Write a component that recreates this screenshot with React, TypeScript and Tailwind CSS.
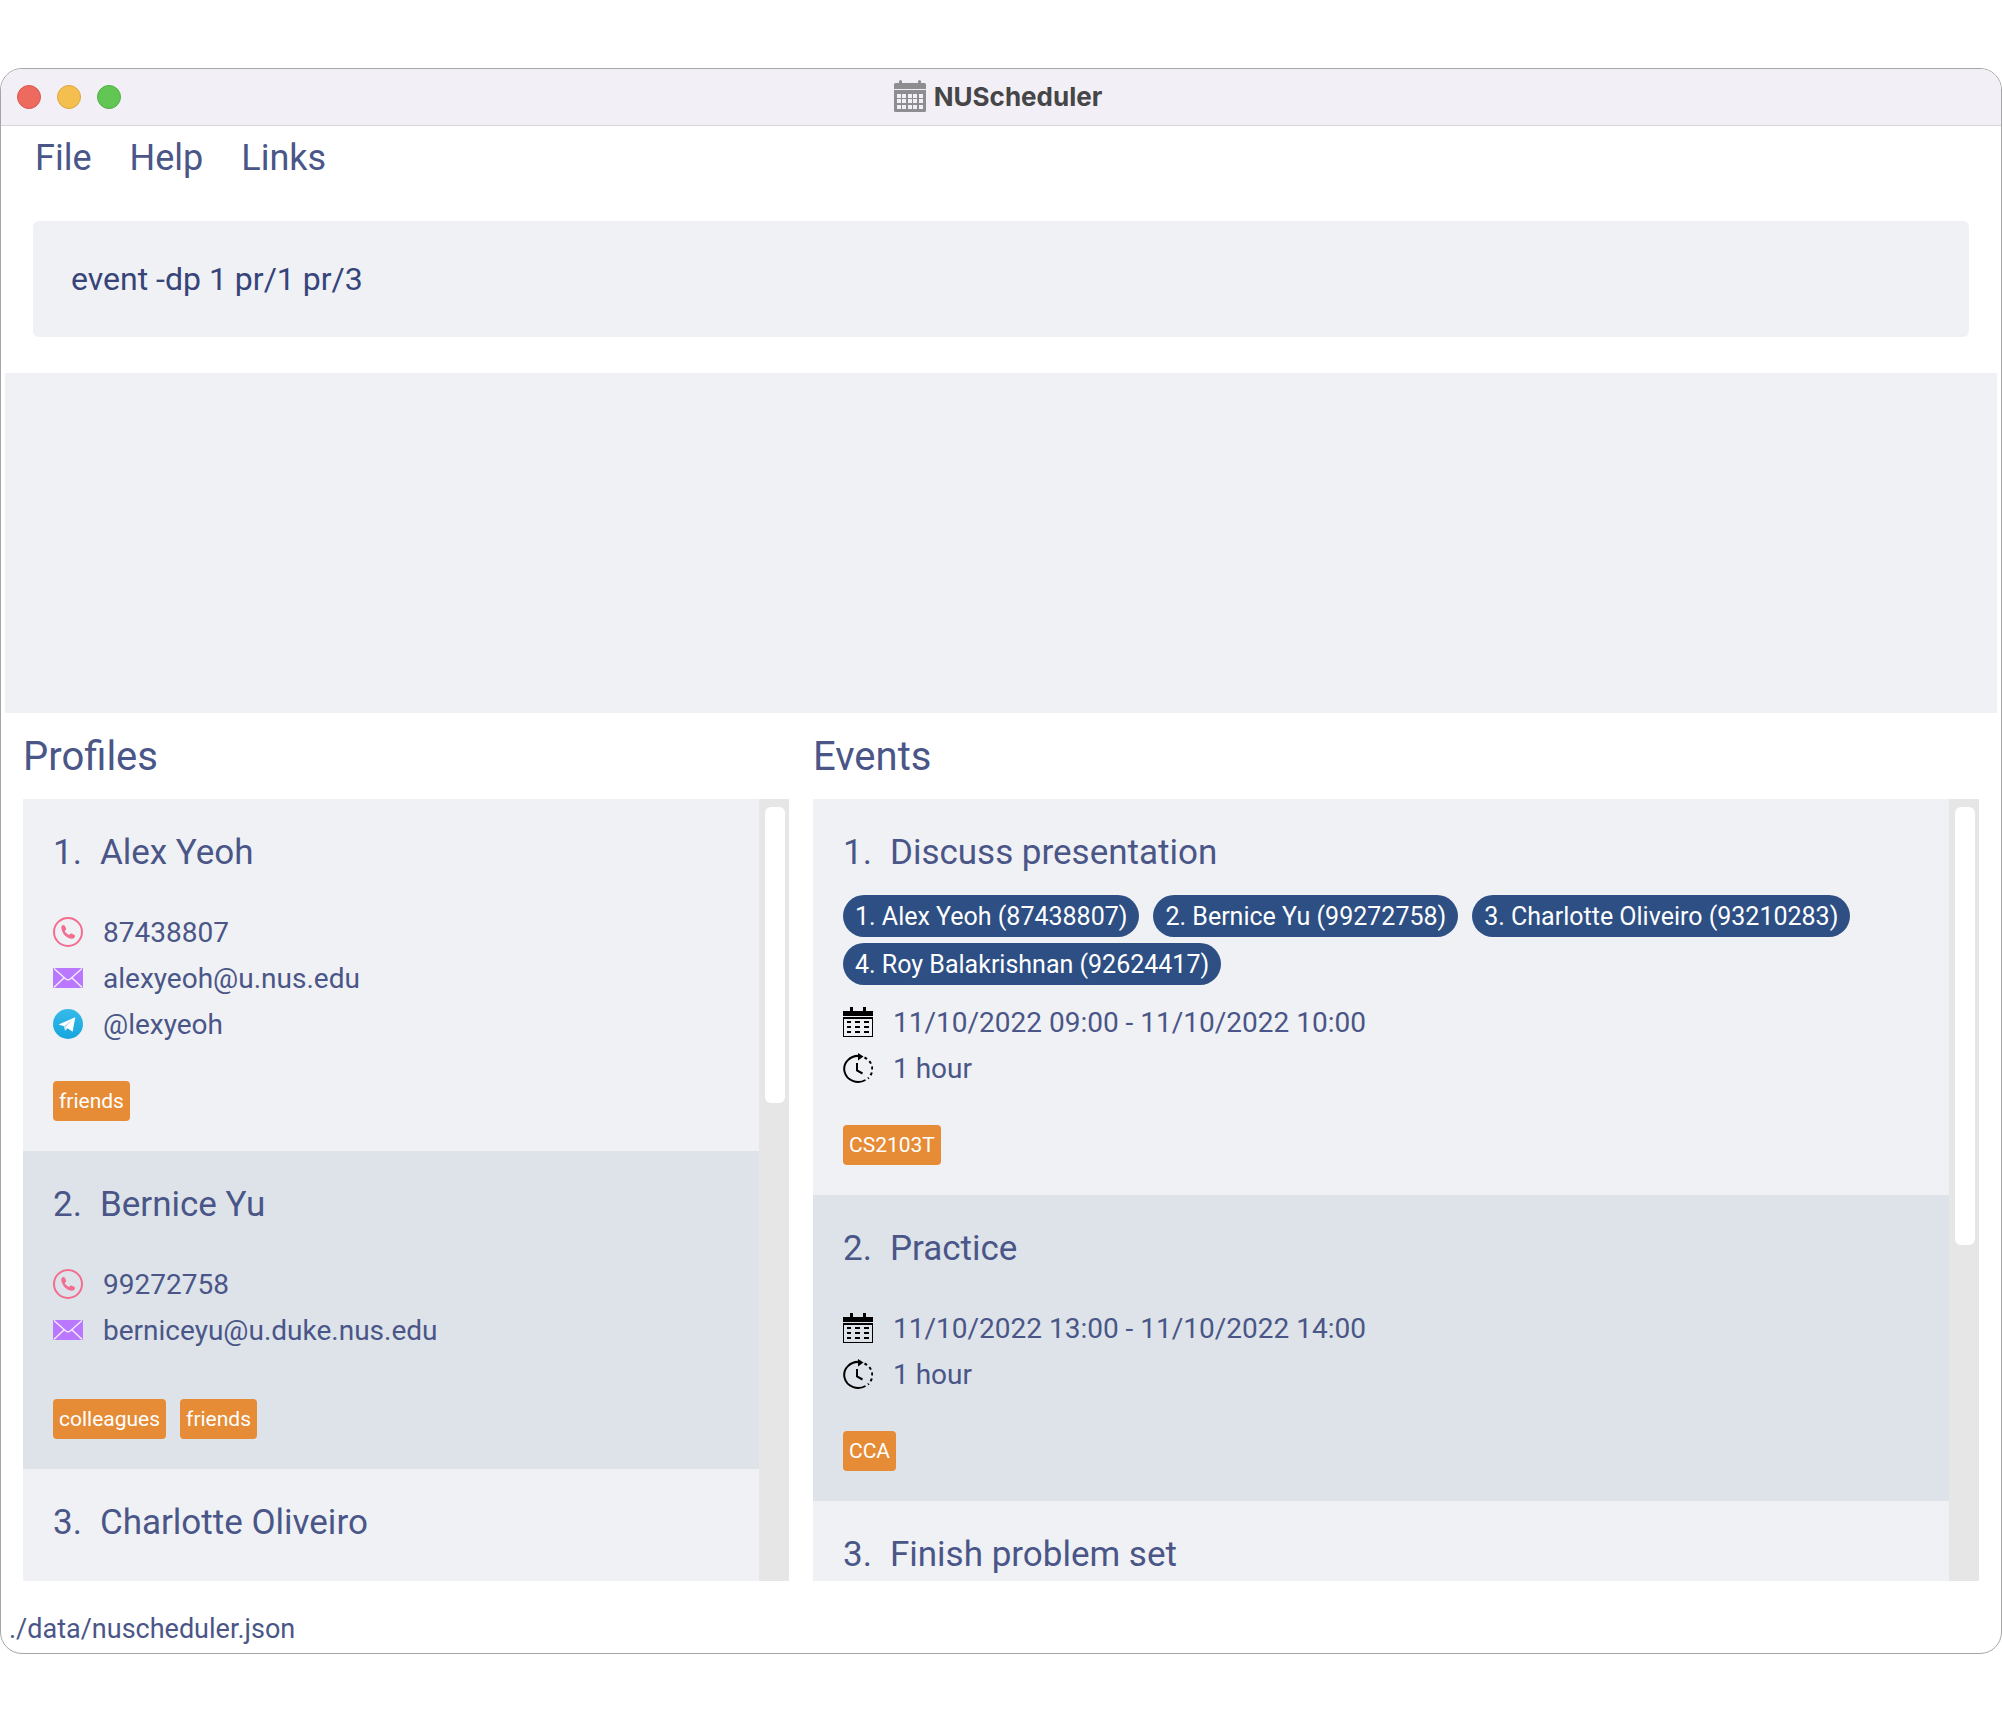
import type { ReactNode } from "react";

type Profile = {
  name: string;
  phone?: string;
  email?: string;
  telegram?: string;
  tags: string[];
};

type ScheduledEvent = {
  title: string;
  attendees: string[];
  period?: string;
  duration?: string;
  tags: string[];
};

const profiles: Profile[] = [
  {
    name: "Alex Yeoh",
    phone: "87438807",
    email: "alexyeoh@u.nus.edu",
    telegram: "@lexyeoh",
    tags: ["friends"],
  },
  {
    name: "Bernice Yu",
    phone: "99272758",
    email: "berniceyu@u.duke.nus.edu",
    tags: ["colleagues", "friends"],
  },
  { name: "Charlotte Oliveiro", tags: [] },
];

const events: ScheduledEvent[] = [
  {
    title: "Discuss presentation",
    attendees: [
      "1. Alex Yeoh (87438807)",
      "2. Bernice Yu (99272758)",
      "3. Charlotte Oliveiro (93210283)",
      "4. Roy Balakrishnan (92624417)",
    ],
    period: "11/10/2022 09:00 - 11/10/2022 10:00",
    duration: "1 hour",
    tags: ["CS2103T"],
  },
  {
    title: "Practice",
    attendees: [],
    period: "11/10/2022 13:00 - 11/10/2022 14:00",
    duration: "1 hour",
    tags: ["CCA"],
  },
  { title: "Finish problem set", attendees: [], tags: [] },
];

function AppIcon() {
  return (
    <svg viewBox="0 0 32 32" className="size-8" aria-hidden="true">
      <path fill="#8e8e90" d="M5 3V1.500a1.500 1.500 0 0 1 3 0V3h16V1.500a1.500 1.500 0 0 1 3 0V3h3.500A1.500 1.500 0 0 1 32 4.500V9H0V4.500A1.500 1.500 0 0 1 1.500 3z" />
      <path fill="#8e8e90" d="M0 10h32v20.500a1.500 1.500 0 0 1-1.500 1.500h-29A1.500 1.500 0 0 1 0 30.500z" />
      {[14, 19, 25].map((y) =>
        [3, 8, 14, 19, 25].map((x) => (
          <rect key={`${x}-${y}`} x={x} y={y} width="4" height="4" fill="#f2f0f6" />
        )),
      )}
    </svg>
  );
}

function PhoneIcon() {
  return (
    <svg viewBox="0 0 30 30" className="size-[30px]" aria-hidden="true">
      <circle cx="15" cy="15" r="14" fill="none" stroke="#f26d8f" strokeWidth="2" />
      <path
        fill="#f26d8f"
        d="M8.300 10.500c0-1.400 1-2.400 2.200-2.500.7 0 1.100.4 1.500 1.200l1 2.100c.3.700.1 1.300-.4 1.800l-.9.900c.8 1.700 2.500 3.200 4.400 4l1-1c.5-.5 1.100-.6 1.700-.3l2.300 1.100c.8.400 1 .9.900 1.500-.2 1.500-1.400 2.500-3 2.500-5.400-.3-10.500-5.700-10.700-11.300z"
      />
    </svg>
  );
}

function MailIcon() {
  return (
    <svg viewBox="0 0 30 30" className="size-[30px]" aria-hidden="true">
      <rect y="5" width="30" height="20" fill="#b978ff" />
      <path
        fill="none"
        stroke="#f4effb"
        strokeWidth="1.400"
        d="M1 5.500l11.500 10.200a3.700 3.700 0 0 0 5 0L29 5.500M0.800 24.500l10.400-9.800M29.200 24.500l-10.400-9.800"
      />
    </svg>
  );
}

function TelegramIcon() {
  return (
    <svg viewBox="0 0 30 30" className="size-[30px]" aria-hidden="true">
      <defs>
        <linearGradient id="telegram-sky" x1="0" y1="0" x2="0" y2="1">
          <stop offset="0" stopColor="#37bbe8" />
          <stop offset="1" stopColor="#15a5de" />
        </linearGradient>
      </defs>
      <circle cx="15" cy="15" r="15" fill="url(#telegram-sky)" />
      <path fill="#fff" d="M5.500 15.500L22.300 8.200 19.600 22.700 14.600 19.300 12.200 21.500 11 17.200z" />
      <path fill="#c3dcf0" d="M11 17.200L20 10.300 13 18 12.200 22z" />
    </svg>
  );
}

function CalendarIcon() {
  return (
    <svg viewBox="0 0 30 30" className="size-[30px]" shapeRendering="crispEdges" aria-hidden="true">
      <path d="M7 0h3v4h10V0h3v4h7v5H0V4h7z" />
      <path fillRule="evenodd" d="M0 10h30v20H0zM1 12v17h28V12z" />
      {[14, 19, 24].map((y) => (
        <path key={y} d={`M4 ${y}h4v2h-4zM12 ${y}h5v2h-5zM21 ${y}h5v2h-5z`} />
      ))}
    </svg>
  );
}

function ClockIcon() {
  return (
    <svg viewBox="0 0 30 30" className="size-[30px]" fill="none" stroke="#000" strokeWidth="2" aria-hidden="true">
      <path d="M17 3A14 13 0 1 0 22.500 27" />
      <path strokeDasharray="3 3" d="M21.500 4.500A14 13 0 0 1 25 25.500" />
      <path fill="#000" stroke="none" d="M15 0l5.500 3.500-5.500 4z" />
      <path d="M14 10v7.500l5.500 3" />
    </svg>
  );
}

function DetailRow({ icon, children }: { icon: ReactNode; children: ReactNode }) {
  return (
    <div className="flex h-[46px] items-center gap-5 text-[28px]">
      {icon}
      <span className="pt-0.5">{children}</span>
    </div>
  );
}

function Tags({ labels }: { labels: string[] }) {
  return (
    <ul className="mt-[34px] flex flex-wrap gap-[14px]">
      {labels.map((label) => (
        <li key={label} className="flex h-10 items-center rounded-[4px] bg-[#e68b36] px-1.5 pt-0.5 text-[21px] text-white">
          {label}
        </li>
      ))}
    </ul>
  );
}

function Card({ index, title, children }: { index: number; title: string; children?: ReactNode }) {
  return (
    <li className="shrink-0 p-[30px] last:grow odd:bg-[#f0f1f5] even:bg-[#dee3ea]">
      <h3 className="flex h-[46px] items-center gap-[18px] pt-0.5 text-[35px]">
        <span>{index}.</span>
        <span>{title}</span>
      </h3>
      {children}
    </li>
  );
}

function Panel({ heading, thumb, children }: { heading: string; thumb: string; children: ReactNode }) {
  return (
    <section className="flex min-h-0 min-w-0 flex-col">
      <h2 className="flex h-[86px] shrink-0 items-center pt-0.5 text-[40px]">{heading}</h2>
      <div className="flex min-h-0 flex-1">
        <ul className="flex min-w-0 flex-1 flex-col overflow-hidden">{children}</ul>
        <div className="w-[30px] shrink-0 bg-[#e6e6e6] py-2 pr-1 pl-1.5">
          <div className={`rounded-md bg-white ${thumb}`} />
        </div>
      </div>
    </section>
  );
}

export default function App() {
  return (
    <div className="h-screen bg-white py-[68px] font-['Roboto',sans-serif] text-[#4a5687]">
      <main className="flex h-full flex-col overflow-hidden rounded-[22px] border border-[#a6a6a8] bg-white">
        <header className="grid h-[57px] shrink-0 grid-cols-[1fr_auto_1fr] items-center border-b border-[#d6d5d8] bg-[#f2f0f6] px-4">
          <div className="flex gap-4">
            <button aria-label="Close" className="size-6 rounded-full border border-[#d9574c] bg-[#ed6a5f]" />
            <button aria-label="Minimize" className="size-6 rounded-full border border-[#dba63c] bg-[#f5bf4f]" />
            <button aria-label="Zoom" className="size-6 rounded-full border border-[#4fae42] bg-[#62c655]" />
          </div>
          <h1 className="flex items-center gap-2 pr-1.5 pb-0.5 font-['Inter',sans-serif] text-[26px] font-bold text-[#464547]">
            <AppIcon />
            NUScheduler
          </h1>
        </header>

        <nav className="flex h-[62px] shrink-0 items-center gap-[38px] px-[34px] pt-0.5 text-[36px]">
          <button>File</button>
          <button>Help</button>
          <button>Links</button>
        </nav>

        <input
          aria-label="Command"
          defaultValue="event -dp 1 pr/1 pr/3"
          className="mx-8 mt-[33px] h-[116px] shrink-0 rounded-md bg-[#f0f1f5] px-[38px] text-[32px] text-[#364479] outline-none"
        />

        <textarea
          aria-label="Result"
          readOnly
          className="mx-1 mt-9 h-[340px] shrink-0 resize-none bg-[#f0f1f5] p-8 text-[28px] outline-none"
        />

        <div className="grid min-h-0 flex-1 grid-cols-[766fr_1166fr] grid-rows-[minmax(0,1fr)] gap-6 px-[22px]">
          <Panel heading="Profiles" thumb="h-[296px]">
            {profiles.map((profile, i) => (
              <Card key={profile.name} index={i + 1} title={profile.name}>
                {profile.phone && (
                  <>
                    <div className="mt-[34px]">
                      <DetailRow icon={<PhoneIcon />}>{profile.phone}</DetailRow>
                      <DetailRow icon={<MailIcon />}>{profile.email}</DetailRow>
                      {profile.telegram ? (
                        <DetailRow icon={<TelegramIcon />}>{profile.telegram}</DetailRow>
                      ) : (
                        <div className="h-3" />
                      )}
                    </div>
                    <Tags labels={profile.tags} />
                  </>
                )}
              </Card>
            ))}
          </Panel>

          <Panel heading="Events" thumb="h-[438px]">
            {events.map((event, i) => (
              <Card key={event.title} index={i + 1} title={event.title}>
                {event.attendees.length > 0 && (
                  <ul className="mt-5 -mb-5 flex flex-wrap gap-x-[14px] gap-y-1.5">
                    {event.attendees.map((attendee) => (
                      <li
                        key={attendee}
                        className="flex h-[42px] items-center rounded-full bg-[#2d4f84] px-3 pt-0.5 text-[25px] text-white"
                      >
                        {attendee}
                      </li>
                    ))}
                  </ul>
                )}
                {event.period && (
                  <>
                    <div className="mt-[34px]">
                      <DetailRow icon={<CalendarIcon />}>{event.period}</DetailRow>
                      <DetailRow icon={<ClockIcon />}>{event.duration}</DetailRow>
                    </div>
                    <Tags labels={event.tags} />
                  </>
                )}
              </Card>
            ))}
          </Panel>
        </div>

        <footer className="mt-6 flex h-12 shrink-0 items-center px-2 text-[27px]">./data/nuscheduler.json</footer>
      </main>
    </div>
  );
}
